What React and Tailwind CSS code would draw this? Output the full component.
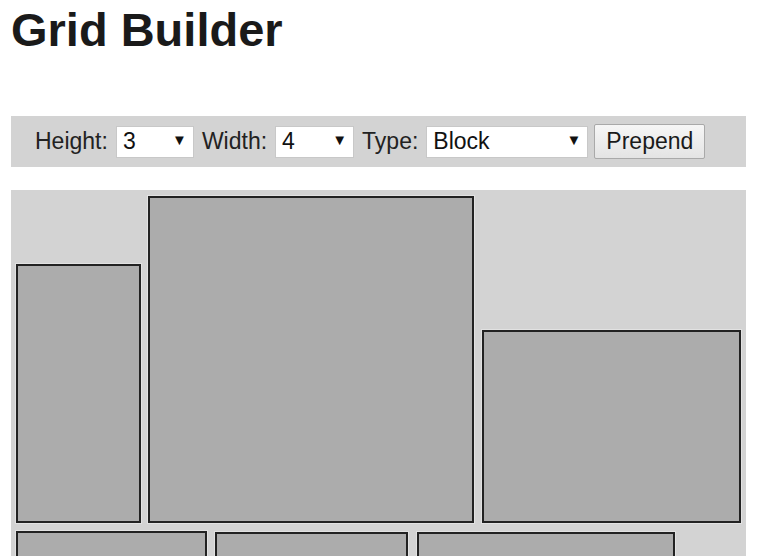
import React, { useState } from 'react';

const rows = [
    [
        { id: 1, w: 125, h: 259, ml: 0 },
        { id: 2, w: 326, h: 327, ml: 7 },
        { id: 3, w: 259, h: 193, ml: 8 },
    ],
    [
        { id: 4, w: 191, h: 160, ml: 0 },
        { id: 5, w: 193, h: 159, ml: 8 },
        { id: 6, w: 258, h: 159, ml: 9 },
    ],
];

const Select = ({ value, onChange, options, width }) => (
    <div className="relative" style={{ width }}>
        <select
            value={value}
            onChange={(e) => onChange(e.target.value)}
            className="w-full h-[32px] appearance-none bg-white border border-[#c8c8c8] pl-[6px] pr-6 text-[23px] leading-none text-[#111] outline-none"
        >
            {options.map((o) => (
                <option key={o} value={o}>{o}</option>
            ))}
        </select>
        <span className="pointer-events-none absolute right-[7px] top-[7px] text-[15px] leading-[18px] text-[#111]">▼</span>
    </div>
);

const App = () => {
    const [height, setHeight] = useState('3');
    const [width, setWidth] = useState('4');
    const [type, setType] = useState('Block');

    return (
        <div className="px-[11px] font-['Liberation_Sans',Arial,sans-serif] text-[#1a1a1a]">
            <h1 className="mt-[3px] text-[47px] leading-[53px] font-bold text-[#1a1a1a]">Grid Builder</h1>

            <div className="mt-[60px] h-[51px] bg-[#d3d3d3] flex items-center pl-[24px] text-[23px] text-[#222]">
                <span>Height:</span>
                <div className="ml-[8px]">
                    <Select value={height} onChange={setHeight} options={['1', '2', '3', '4']} width={78} />
                </div>
                <span className="ml-[8px]">Width:</span>
                <div className="ml-[8px]">
                    <Select value={width} onChange={setWidth} options={['1', '2', '3', '4']} width={79} />
                </div>
                <span className="ml-[8px]">Type:</span>
                <div className="ml-[8px]">
                    <Select value={type} onChange={setType} options={['Block', 'Line']} width={162} />
                </div>
                <button className="ml-[6px] h-[35px] w-[111px] rounded-[2px] border border-[#a9a9a9] bg-gradient-to-b from-[#f6f6f6] to-[#e4e4e4] text-[23px] leading-none text-[#1a1a1a]">
                    Prepend
                </button>
            </div>

            <div className="mt-[23px] bg-[#d3d3d3] pt-[6px] pl-[5px] pr-[4px] pb-[8px] flex flex-col gap-[8px]">
                {rows.map((row, i) => (
                    <div key={i} className="flex items-end">
                        {row.map((b) => (
                            <div
                                key={b.id}
                                className="bg-[#acacac] border-2 border-[#222] shadow-[0_0_0_1px_#e2e2e2]"
                                style={{ width: b.w, height: b.h, marginLeft: b.ml }}
                            />
                        ))}
                    </div>
                ))}
            </div>
        </div>
    );
};

export default App;
